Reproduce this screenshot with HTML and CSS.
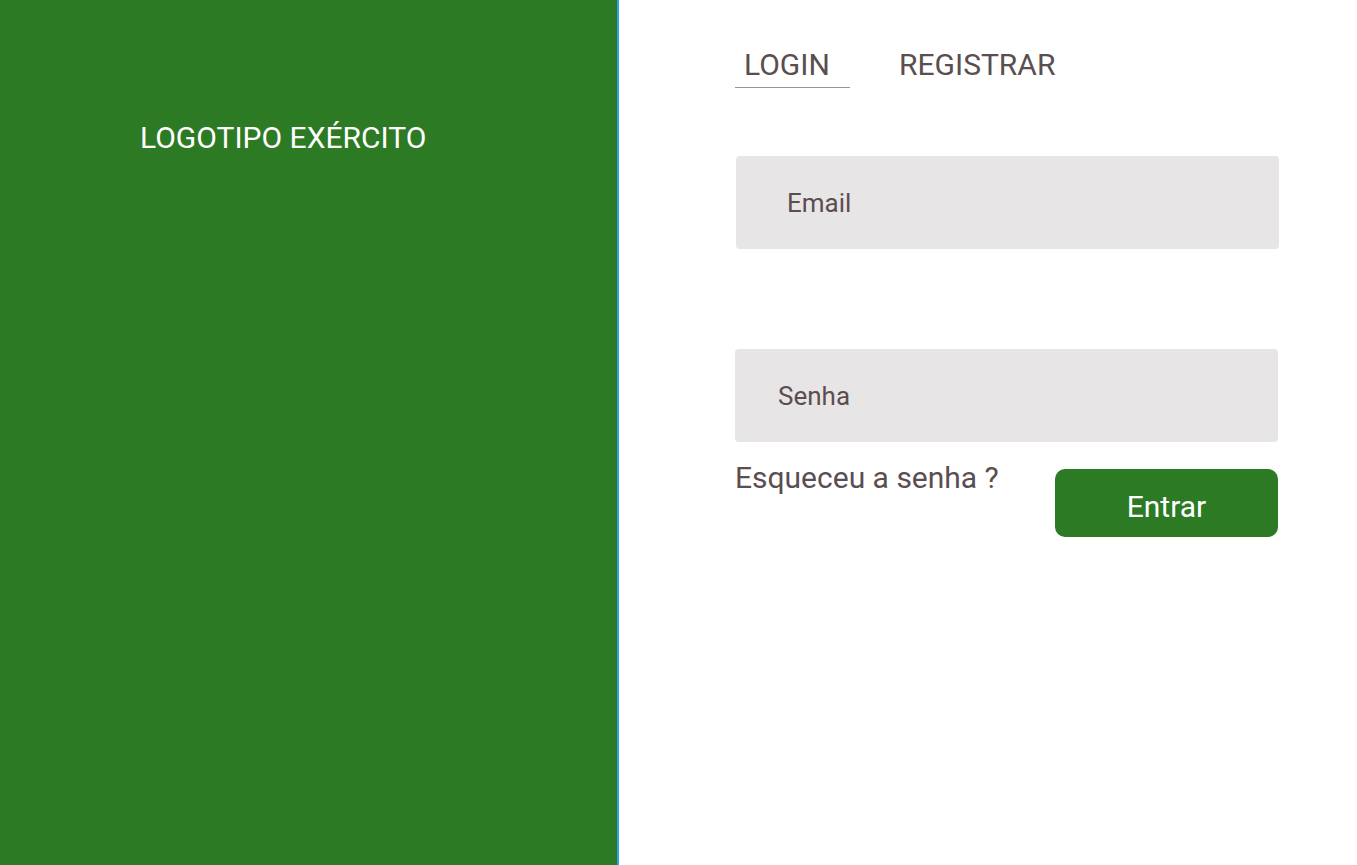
FILE: index.html
```html
<!DOCTYPE html>
<html lang="pt-BR">
<head>
<meta charset="utf-8">
<title>Login</title>
<link rel="stylesheet" href="styles.css">
</head>
<body>
<div class="page">
  <aside class="brand">
    <div class="logo">LOGOTIPO EXÉRCITO</div>
  </aside>
  <main class="panel">
    <nav class="tabs">
      <span class="tab active">LOGIN</span>
      <span class="tab">REGISTRAR</span>
    </nav>
    <div class="field field-email">Email</div>
    <div class="field field-senha">Senha</div>
    <div class="actions">
      <span class="forgot">Esqueceu a senha ?</span>
      <button class="btn">Entrar</button>
    </div>
  </main>
</div>
</body>
</html>
```
FILE: styles.css
```css
* { box-sizing: border-box; }
html, body { margin: 0; padding: 0; height: 100%; }
body {
  font-family: Roboto, "Liberation Sans", sans-serif;
  color: #5a4e4e;
  background: #fff;
}
.page {
  display: flex;
  height: 865px;
}
.brand {
  width: 619px;
  flex: 0 0 619px;
  background: #2c7a24;
  border-right: 2px solid #2aa4e8;
  padding: 118px 0 0 140px;
}
.logo {
  color: #fff;
  font-size: 30px;
  line-height: 40px;
}
.panel {
  flex: 1;
  padding: 44px 0 0 116px;
}
.tabs {
  display: flex;
  gap: 49px;
  height: 44px;
}
.tab {
  font-size: 30px;
  line-height: 42px;
  padding: 0 0 0 9px;
}
.tab.active {
  width: 115px;
  border-bottom: 1px solid #9a9595;
  height: 44px;
}
.tab:not(.active) { padding-left: 0; }
.field {
  width: 543px;
  height: 93px;
  background: #e7e5e6;
  border-radius: 4px;
  font-size: 26px;
  display: flex;
  align-items: center;
}
.field-email {
  margin: 68px 0 0 1px;
  padding-left: 51px;
}
.field-senha {
  margin-top: 100px;
  padding-left: 43px;
}
.actions {
  display: flex;
  justify-content: space-between;
  width: 543px;
  margin-top: 16px;
  align-items: flex-start;
}
.forgot {
  font-size: 30px;
  line-height: 40px;
}
.btn {
  width: 223px;
  height: 68px;
  margin-top: 11px;
  background: #2c7a24;
  color: #fff;
  border: 0;
  border-radius: 10px;
  font-family: Roboto, "Liberation Sans", sans-serif;
  font-size: 30px;
  padding: 6px 0 0;
}
```
